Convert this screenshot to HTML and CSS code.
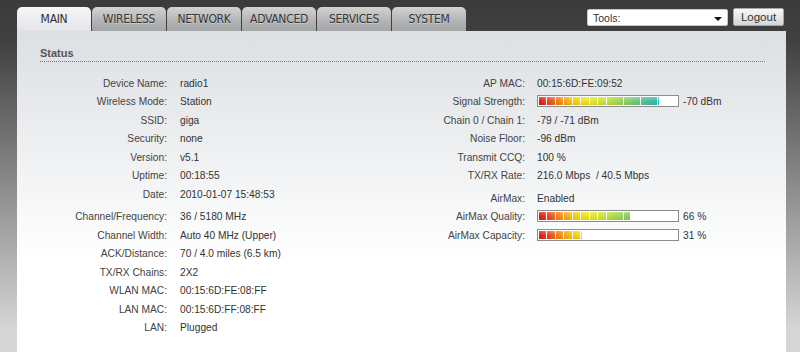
FILE: index.html
```html
<!DOCTYPE html>
<html lang="en">
  <head>
    <meta charset="utf-8">
    <title>Main</title>
    <link rel="stylesheet" href="styles.css">
  </head>
  <body>
    <div class="top">
      <ul class="tabs">
        <li class="tab active">MAIN</li>
        <li class="tab">WIRELESS</li>
        <li class="tab">NETWORK</li>
        <li class="tab">ADVANCED</li>
        <li class="tab">SERVICES</li>
        <li class="tab">SYSTEM</li>
      </ul>
      <div class="tools_area">
        <div class="tools">
          <span>Tools:</span>
          <span class="arrow"></span>
        </div>
        <button class="logout">Logout</button>
      </div>
    </div>

    <div class="panel">
      <div class="heading">Status</div>

      <div class="info">
        <div class="col col_left">
          <div class="row"><span class="label">Device Name:</span><span class="value">radio1</span></div>
          <div class="row"><span class="label">Wireless Mode:</span><span class="value">Station</span></div>
          <div class="row"><span class="label">SSID:</span><span class="value">giga</span></div>
          <div class="row"><span class="label">Security:</span><span class="value">none</span></div>
          <div class="row"><span class="label">Version:</span><span class="value">v5.1</span></div>
          <div class="row"><span class="label">Uptime:</span><span class="value">00:18:55</span></div>
          <div class="row"><span class="label">Date:</span><span class="value">2010-01-07 15:48:53</span></div>

          <div class="row sep"><span class="label">Channel/Frequency:</span><span class="value">36 / 5180 MHz</span></div>
          <div class="row"><span class="label">Channel Width:</span><span class="value">Auto 40 MHz (Upper)</span></div>
          <div class="row"><span class="label">ACK/Distance:</span><span class="value">70 / 4.0 miles (6.5 km)</span></div>
          <div class="row"><span class="label">TX/RX Chains:</span><span class="value">2X2</span></div>
          <div class="row"><span class="label">WLAN MAC:</span><span class="value">00:15:6D:FE:08:FF</span></div>
          <div class="row"><span class="label">LAN MAC:</span><span class="value">00:15:6D:FF:08:FF</span></div>
          <div class="row"><span class="label">LAN:</span><span class="value">Plugged</span></div>
        </div>

        <div class="col col_right">
          <div class="row"><span class="label">AP MAC:</span><span class="value">00:15:6D:FE:09:52</span></div>
          <div class="row"><span class="label">Signal Strength:</span><span class="value"><span class="bar"><span class="fill" style="width:87%"></span></span><span class="bar_text">-70 dBm</span></span></div>
          <div class="row"><span class="label">Chain 0 / Chain 1:</span><span class="value">-79 / -71 dBm</span></div>
          <div class="row"><span class="label">Noise Floor:</span><span class="value">-96 dBm</span></div>
          <div class="row"><span class="label">Transmit CCQ:</span><span class="value">100 %</span></div>
          <div class="row"><span class="label">TX/RX Rate:</span><span class="value">216.0 Mbps&nbsp; / 40.5 Mbps</span></div>

          <div class="row sep"><span class="label">AirMax:</span><span class="value">Enabled</span></div>
          <div class="row"><span class="label">AirMax Quality:</span><span class="value"><span class="bar"><span class="fill" style="width:66%"></span></span><span class="bar_text">66 %</span></span></div>
          <div class="row"><span class="label">AirMax Capacity:</span><span class="value"><span class="bar"><span class="fill" style="width:31%"></span></span><span class="bar_text">31 %</span></span></div>
        </div>
      </div>
    </div>
  </body>
</html>
```

FILE: styles.css
```css
html {
  height: 100%;
}

body {
  margin: 0;
  height: 100%;
  background: linear-gradient(#3b3b3b 0, #404040 40px, #d6d6d6 330px);
  font-family: "Liberation Sans", Arial, sans-serif;
  color: #333;
  overflow: hidden;
}

/* top bar */
.top {
  display: flex;
  height: 31px;
  padding: 0 16px 0 17px;
}

.tabs {
  display: flex;
  gap: 1px;
  margin: 0;
  padding: 0;
  list-style: none;
  align-self: flex-end;
}

.tab {
  width: 74px;
  height: 24px;
  line-height: 25px;
  text-align: center;
  font-family: "Liberation Sans Narrow", "DejaVu Sans Condensed", sans-serif;
  font-size: 12px;
  letter-spacing: -0.3px;
  color: #363636;
  text-shadow: 0 1px 0 rgba(255, 255, 255, 0.35);
  background: linear-gradient(#d3d3d3, #b4b5b6 55%, #a3a5a7);
  border-radius: 5px 5px 0 0;
}

.tab.active {
  background: linear-gradient(#f6f6f6, #e3e5e8);
  color: #303030;
}

.tools_area {
  margin-left: auto;
  display: flex;
  gap: 5px;
  align-items: flex-start;
  padding-top: 8px;
}

.tools {
  margin-top: 1px;
  height: 15px;
  border: 1px solid #c8c8c8;
  border-radius: 2px;
  background: #fff;
  display: flex;
  align-items: center;
  padding: 0 0 0 5px;
  box-sizing: content-box;
  width: 134px;
  font-size: 10.5px;
  color: #333;
}

.tools .arrow {
  margin-left: auto;
  margin-right: 5px;
  width: 0;
  height: 0;
  border-left: 4px solid transparent;
  border-right: 4px solid transparent;
  border-top: 4px solid #111;
  margin-top: 2px;
}

.logout {
  width: 51px;
  height: 18px;
  padding: 0;
  border: 1px solid #a8a8a8;
  border-radius: 2px;
  background: linear-gradient(#f7f7f7, #d6d6d6);
  font-family: "Liberation Sans", Arial, sans-serif;
  font-size: 11.5px;
  color: #333;
}

/* main panel */
.panel {
  margin: 0 14px 0 17px;
  height: 321px;
  padding: 0 21px 0 23px;
  background: linear-gradient(#dcdfe3, #f3f4f5 150px, #fff 230px);
}

.heading {
  padding-top: 16px;
  padding-bottom: 1px;
  line-height: 13px;
  font-size: 11px;
  font-weight: bold;
  color: #555;
  border-bottom: 1px dotted #7a7a7a;
}

.info {
  display: flex;
  margin-top: 12.5px;
  font-size: 10.2px;
}

.col_left {
  width: 360px;
}

.col {
  display: flex;
  flex-direction: column;
}

.row {
  display: flex;
  height: 18.5px;
  line-height: 18.5px;
  white-space: nowrap;
}

.row.sep {
  margin-top: 4px;
}

.label {
  text-align: right;
  color: #444;
  box-sizing: border-box;
}

.col_left .label {
  width: 140px;
  padding-right: 13px;
}

.col_right .label {
  width: 137px;
  padding-right: 12px;
}

.value {
  color: #333;
  display: flex;
}

/* level bars */
.bar {
  display: block;
  width: 138px;
  height: 8px;
  padding: 1px;
  margin-top: 2px;
  border: 1px solid #8c8c8c;
  background: #fff;
}

.fill {
  display: block;
  height: 100%;
  background:
    linear-gradient(rgba(255, 255, 255, 0.25), rgba(255, 255, 255, 0) 50%, rgba(0, 0, 0, 0.08)),
    repeating-linear-gradient(90deg, rgba(255, 255, 255, 0) 0, rgba(255, 255, 255, 0) 7.5px, #fff 7.5px, #fff 8.5px),
    linear-gradient(90deg, #df1a1a 0, #e84420 9px, #f07a18 18px, #f5aa1c 27px, #f7d000 36px, #f3e020 45px, #e4e630 54px, #cce63a 63px, #b4de4a 72px, #9cd65a 81px, #86ce6a 90px, #6ac682 99px, #50bf98 108px, #38b8b0 117px, #22aec6 126px, #1298d8 138px);
  background-size: 100% 100%, 138px 100%, 138px 100%;
  background-repeat: no-repeat;
}

.bar_text {
  margin-left: 4px;
}
```
